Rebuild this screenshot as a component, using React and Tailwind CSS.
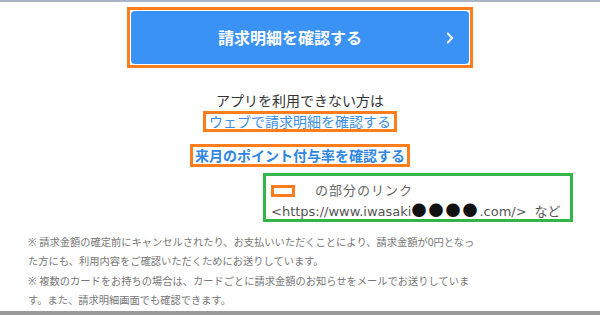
import { ChevronRight } from 'lucide-react';

const font = { fontFamily: '"Noto Sans", "Noto Sans CJK JP", sans-serif' };

const notes = [
  '※ 請求金額の確定前にキャンセルされたり、お支払いいただくことにより、請求金額が0円となった方にも、利用内容をご確認いただくためにお送りしています。',
  '※ 複数のカードをお持ちの場合は、カードごとに請求金額のお知らせをメールでお送りしています。また、請求明細画面でも確認できます。',
  '※ 配信時点の金額です。詳細は請求明細をご確認ください。',
];

const App = () => {
  return (
    <div
      className="w-[600px] h-[315px] overflow-hidden bg-white flex flex-col relative"
      style={font}
    >
      <div className="h-[2px] bg-[#a9b5c7] shrink-0" />

      <div className="flex justify-center pt-[5px]">
        <div className="w-[346px] h-[61px] border-[3px] border-[#ff7d1c] p-px">
          <div className="h-full rounded-[4px] bg-[#3a92f5] flex items-center relative">
            <span className="flex-1 text-center text-white font-bold text-[16px] pr-[20px]">
              請求明細を確認する
            </span>
            <ChevronRight
              className="absolute right-[10px] w-[18px] h-[18px] text-white"
              strokeWidth={2.5}
            />
          </div>
        </div>
      </div>

      <div className="flex flex-col items-center mt-[24px] text-[14px] leading-[18px]">
        <p className="text-[#333]">アプリを利用できない方は</p>
        <div className="border-[3px] border-[#ff7d1c] px-[3px] leading-[15px] mt-px">
          <span className="text-[#3b8fe6]">ウェブで請求明細を確認する</span>
        </div>
        <div className="border-[3px] border-[#ff7d1c] px-[2px] leading-[17px] mt-[12px]">
          <span className="text-[#2f86e3] font-bold">来月のポイント付与率を確認する</span>
        </div>
      </div>

      <div className="flex justify-end pr-[27px] mt-[6px]">
        <div className="w-[310px] h-[49px] border-[3px] border-[#32b64a] px-[5px] pt-[4px] text-[13px] leading-[21px] text-[#555]">
          <div className="flex items-center">
            <span className="w-[24px] h-[12px] border-[3px] border-[#ff7d1c] inline-block" />
            <span className="ml-[20px] tracking-[1px] text-[#666]">の部分のリンク</span>
          </div>
          <div className="whitespace-nowrap">
            <span style={{ fontFamily: '"DejaVu Sans", sans-serif' }}>
              &lt;https://www.iwasaki
            </span>
            <span className="text-[15px] leading-[0] text-[#111] tracking-[2px]">●●●●</span>
            <span style={{ fontFamily: '"DejaVu Sans", sans-serif' }}>
              .com/&gt;
            </span>
            <span className="ml-[8px]">など</span>
          </div>
        </div>
      </div>

      <div className="pl-[28px] pr-[117px] mt-[11px] text-[10.25px] leading-[19.3px] text-[#777]">
        {notes.map((n) => (
          <p key={n}>{n}</p>
        ))}
      </div>

      <div className="absolute left-0 right-0 bottom-0 h-[4px] bg-[#9a9a9a]" />
    </div>
  );
};

export default App;
